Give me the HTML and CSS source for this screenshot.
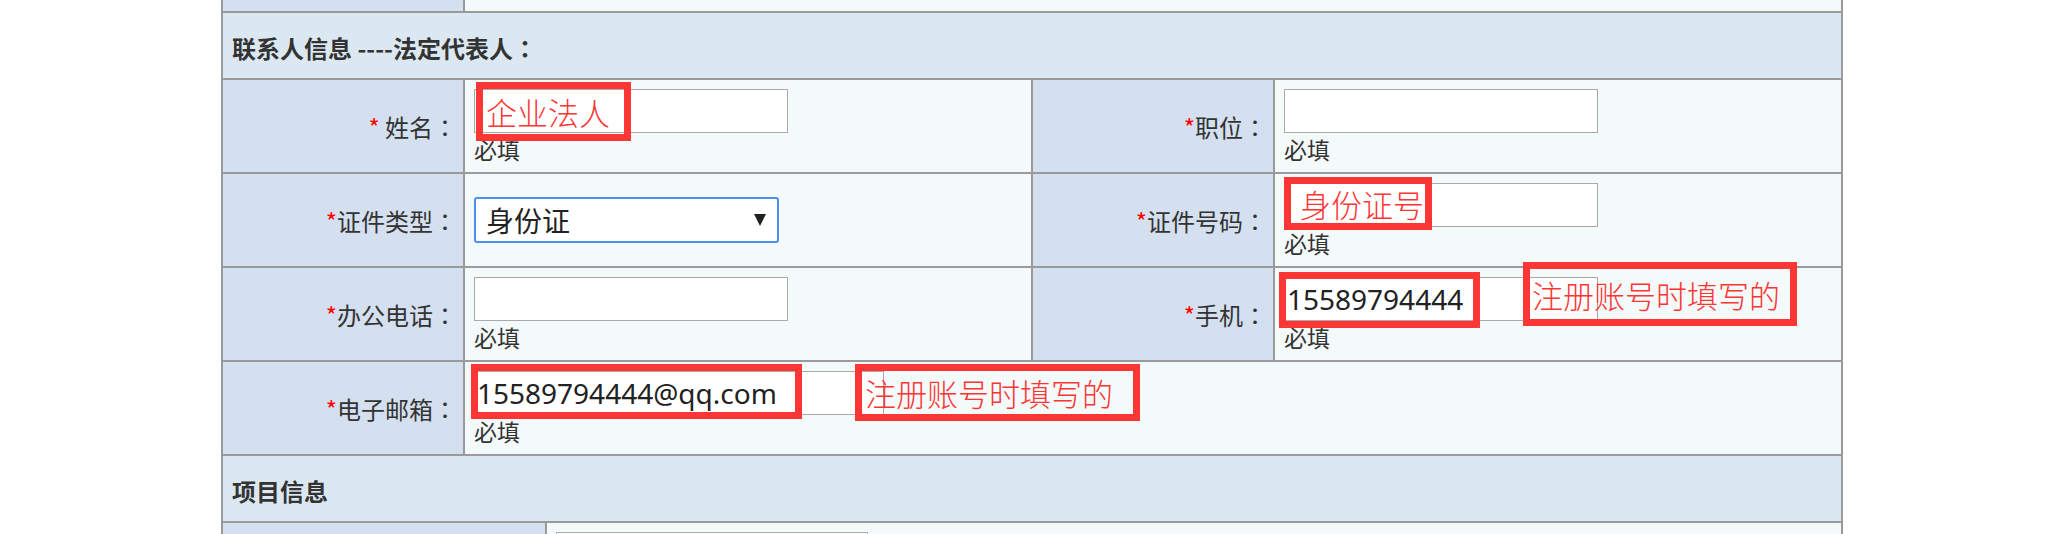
FILE: index.html
```html
<!DOCTYPE html>
<html lang="zh-CN">
<head>
<meta charset="utf-8">
<title>联系人信息</title>
<link rel="stylesheet" href="styles.css">
</head>
<body>
<div class="form">
  <div class="grid main">
    <div class="label top"></div>
    <div class="value top span3"></div>

    <div class="section">联系人信息 ----法定代表人<span class="colon">：</span></div>

    <div class="label"><span class="req">*</span>&nbsp;姓名<span class="colon">：</span></div>
    <div class="value">
      <div class="field">
        <input class="text" type="text">
        <div class="note n-name">企业法人</div>
      </div>
      <div class="hint">必填</div>
    </div>
    <div class="label"><span class="req">*</span>职位<span class="colon">：</span></div>
    <div class="value">
      <div class="field"><input class="text" type="text"></div>
      <div class="hint">必填</div>
    </div>

    <div class="label"><span class="req">*</span>证件类型<span class="colon">：</span></div>
    <div class="value center">
      <div class="select">
        <span>身份证</span>
        <svg class="arrow" width="12" height="12" viewBox="0 0 12 12"><polygon points="0,0 12,0 6,12" fill="#222"/></svg>
      </div>
    </div>
    <div class="label"><span class="req">*</span>证件号码<span class="colon">：</span></div>
    <div class="value">
      <div class="field">
        <input class="text" type="text">
        <div class="note n-id">身份证号</div>
      </div>
      <div class="hint">必填</div>
    </div>

    <div class="label"><span class="req">*</span>办公电话<span class="colon">：</span></div>
    <div class="value">
      <div class="field"><input class="text" type="text"></div>
      <div class="hint">必填</div>
    </div>
    <div class="label"><span class="req">*</span>手机<span class="colon">：</span></div>
    <div class="value">
      <div class="field">
        <input class="text" type="text" value="15589794444">
        <div class="note n-phone"></div>
        <div class="note n-phone-tip">注册账号时填写的</div>
      </div>
      <div class="hint">必填</div>
    </div>

    <div class="label"><span class="req">*</span>电子邮箱<span class="colon">：</span></div>
    <div class="value span3">
      <div class="field">
        <input class="text wide" type="text" value="15589794444@qq.com">
        <div class="note n-mail"></div>
        <div class="note n-mail-tip">注册账号时填写的</div>
      </div>
      <div class="hint">必填</div>
    </div>

    <div class="section">项目信息</div>
  </div>
  <div class="grid sub">
    <div class="label"></div>
    <div class="value"><input class="text narrow" type="text"></div>
  </div>
</div>
</body>
</html>
```
FILE: styles.css
```css
* { box-sizing: border-box; }

body {
  margin: 0;
  background: #fff;
  font-family: "Noto Sans CJK SC", "Noto Sans", sans-serif;
  font-size: 24px;
  color: #333;
}

.form {
  width: 1622px;
  margin-left: 221px;
}

.grid {
  display: grid;
  gap: 2px;
  padding: 0 2px 2px;
  background: #9a9a9a;
}

.main { grid-template-columns: 240px 566px 240px 566px; }
.sub { grid-template-columns: 322px 1fr; }

.label {
  background: #d4e0ef;
  display: flex;
  align-items: center;
  justify-content: flex-end;
  padding-right: 6px;
  white-space: nowrap;
}

.colon { font-family: "Noto Sans CJK TC", "Noto Sans CJK SC", sans-serif; }

.value {
  background: #f4f9f9;
  padding: 9px;
}

.span3 { grid-column: span 3; }

.top { height: 11px; padding: 0; }

.section {
  grid-column: 1 / -1;
  height: 65px;
  background: #dbe8f2;
  display: flex;
  align-items: center;
  padding: 3px 9px 0;
  font-weight: bold;
  font-size: 24px;
}

.req { color: #f00; }

.field { position: relative; }

.text {
  display: block;
  width: 314px;
  height: 44px;
  margin: 0;
  padding: 0 2px;
  border: 1px solid #a9a9a9;
  background: #fff;
  font-family: "Noto Sans", "Noto Sans CJK SC", sans-serif;
  font-size: 28px;
  color: #222;
  outline: none;
}

.text.wide { width: 410px; }
.text.narrow { width: 312px; }

.hint {
  padding-top: 2px;
  line-height: 28px;
  font-size: 23px;
}

.center {
  display: flex;
  align-items: center;
}

.select {
  width: 305px;
  height: 46px;
  border: 2px solid #4d90f0;
  border-radius: 3px;
  background: #fff;
  display: flex;
  align-items: center;
  justify-content: space-between;
  padding: 0 11px 0 10px;
  font-size: 28px;
  color: #222;
}

.note {
  position: absolute;
  border: 7px solid #fc3535;
  color: #fc3535;
  font-size: 31px;
  line-height: 1;
  display: flex;
  align-items: center;
  white-space: nowrap;
  font-weight: 300;
}

.n-name { left: 2px; top: -7px; width: 155px; height: 59px; padding-left: 3px; }
.n-id { left: 0; top: -6px; width: 148px; height: 53px; padding-left: 9px; }
.n-phone { left: -5px; top: -5px; width: 201px; height: 56px; }
.n-phone-tip { left: 239px; top: -15px; width: 274px; height: 64px; padding-left: 2px; }
.n-mail { left: -3px; top: -7px; width: 331px; height: 55px; }
.n-mail-tip { left: 381px; top: -7px; width: 285px; height: 57px; padding-left: 3px; }
```
